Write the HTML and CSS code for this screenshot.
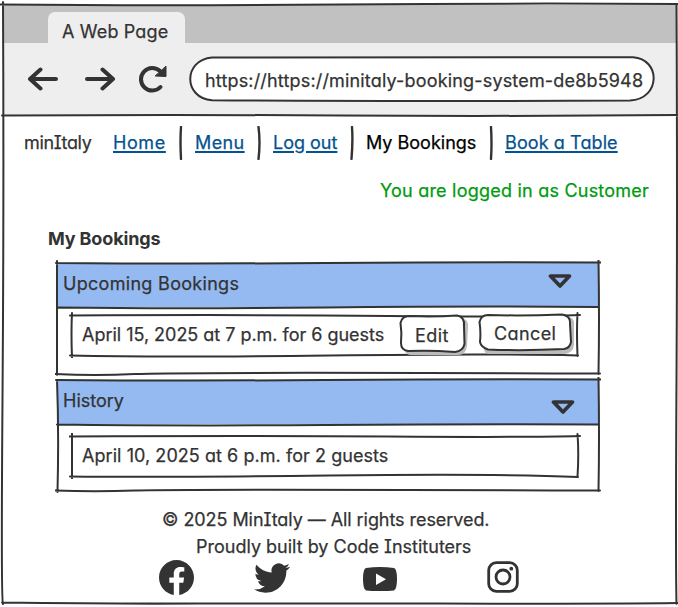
FILE: index.html
```html
<!DOCTYPE html>
<html lang="en">
<head>
<meta charset="utf-8">
<title>My Bookings</title>
<link rel="stylesheet" href="styles.css">
</head>
<body>
<div class="window">
  <svg class="frame" viewBox="0 0 678 607"><path d="M0 4.5Q160 6 340 4.500T678 4M3 2Q4 200 2.500 400T3 604M676.500 4Q677.500 200 676.500 380T676.500 604M2 115.500Q170 114.500 340 115.500T678 115M2 602.500Q110 604 200 603.500T440 603.500T678 603"/></svg>
  <header class="chrome">
    <div class="tabs"><div class="tab">A Web Page</div></div>
    <div class="toolbar">
      <svg class="arrow" viewBox="0 0 32 24"><path d="M29 12H3M13.500 2.500L3 12L13.500 21.500"/></svg>
      <svg class="arrow" viewBox="0 0 32 24"><path d="M3 12H29M18.500 2.500L29 12L18.500 21.500"/></svg>
      <svg class="reload" viewBox="0 0 30 28"><path d="M22.500 22A11.300 11.300 0 1 1 22 6"/><path class="solid" d="M28 1.500L28 11.500L17.500 11Z"/></svg>
      <div class="address">
        <svg class="outline" viewBox="0 0 466 46"><path class="paper" d="M23 1.500Q220 2 444 1.200C472 3 472 43 441 44.500Q220 45.500 23 44.300C-6 42 -6 4 23 1.500Z"/></svg>
        <span>https://https://minitaly-booking-system-de8b5948</span>
      </div>
    </div>
  </header>
  <nav class="nav">
    <span class="brand">minItaly</span>
    <a class="home">Home</a><svg class="sep" viewBox="0 0 4 34"><path d="M2 1Q1 15 2 33"/></svg>
    <a class="menu">Menu</a><svg class="sep" viewBox="0 0 4 34"><path d="M1.500 1Q3.500 16 1.500 33"/></svg>
    <a class="logout">Log out</a><svg class="sep" viewBox="0 0 4 34"><path d="M2 1Q3 15 1.500 33"/></svg>
    <span class="current">My Bookings</span><svg class="sep" viewBox="0 0 4 34"><path d="M2 1Q3 18 2 33"/></svg>
    <a class="book">Book a Table</a>
  </nav>
  <p class="status">You are logged in as Customer</p>
  <main>
    <h1>My Bookings</h1>
    <section class="panel upcoming">
      <div class="head"><span>Upcoming Bookings</span><svg class="caret" viewBox="0 0 24 16"><path d="M2.500 3H21.500L12 13Z"/></svg></div>
      <svg class="outline" viewBox="0 0 546 116"><path d="M1 3Q130 4 270 3T546 2.500M2 1V115M543.500 0Q544.500 60 543.500 114M3 47.500Q120 49 270 47.500T543 47M0 114Q40 116 80 114T545 113.500"/></svg>
      <div class="entry">
        <svg class="outline" viewBox="0 0 512 46"><path d="M1 3.500Q180 2.500 320 4T511 3M3 1Q2 20 3 46M508.500 1Q507.500 20 508.500 44M1 43.500Q90 45.500 260 43.500T509 43.500"/></svg>
        <span class="april15">April 15, 2025 at 7 p.m. for 6 guests</span>
        <button class="edit"><svg class="outline" viewBox="0 0 70 42"><path class="shadow" d="M10 4H61Q69 4 69 12L68 32Q67 41 59 41H12Q7 41 6 37Z"/><path class="paper" d="M10 2Q35 3 58 1.500Q66 3 65 12L65.500 30Q64 37 56 38Q32 36 9 37Q2 36 2 29Q3 19 1.500 9Q3 2 10 2Z"/></svg><span>Edit</span></button>
        <button class="cancel"><svg class="outline" viewBox="0 0 98 42"><path class="shadow" d="M10 4H89Q97 4 96 12L96 32Q95 40 87 41H12Q7 41 6 37Z"/><path class="paper" d="M10 2Q45 3 84 1.500Q93 3 92 11L93 29Q92 35 86 36Q45 38 10 36.500Q3 34 2 29Q3 19 1.500 9Q3 2 10 2Z"/></svg><span>Cancel</span></button>
      </div>
    </section>
    <section class="panel history">
      <div class="head"><span>History</span><svg class="caret" viewBox="0 0 24 16"><path d="M2.500 3H21.500L12 13Z"/></svg></div>
      <svg class="outline" viewBox="0 0 546 116"><path d="M1 3Q130 4 270 3T546 2.500M2 3Q4 55 2.500 115M543.500 0Q544.500 60 543.500 114M2 47.500Q120 49 270 48T543 47.500M0 113.500Q40 115 80 113.500T545 113.500"/></svg>
      <div class="entry">
        <svg class="outline" viewBox="0 0 512 46"><path d="M0 3.500Q180 2.500 320 3.500T511 3M3 0V46M508.500 1Q510 20 508.500 44M1 43.500Q90 44.500 260 42.500T509 44"/></svg>
        <span class="april10">April 10, 2025 at 6 p.m. for 2 guests</span>
      </div>
    </section>
  </main>
  <footer>
    <p class="rights">© 2025 MinItaly — All rights reserved.</p>
    <p class="built">Proudly built by Code Instituters</p>
    <div class="social">
      <svg class="facebook" viewBox="0 0 24 24"><path d="M24 12.073C24 5.446 18.627 0 12 0S0 5.446 0 12.073c0 6.026 4.388 11.020 10.125 11.927v-8.437H7.078v-3.490h3.047v-2.660c0-3.026 1.792-4.697 4.533-4.697 1.312 0 2.686.236 2.686.236v2.970h-1.513c-1.491 0-1.956.931-1.956 1.886v2.265h3.328l-.532 3.490h-2.796V24C19.612 23.093 24 18.099 24 12.073z"/></svg>
      <svg class="twitter" viewBox="0 0 24 24"><path d="M23.953 4.570a10 10 0 01-2.825.775 4.958 4.958 0 002.163-2.723c-.951.555-2.005.959-3.127 1.184a4.920 4.920 0 00-8.384 4.482C7.690 8.095 4.067 6.130 1.640 3.162a4.822 4.822 0 00-.666 2.475c0 1.710.870 3.213 2.188 4.096a4.904 4.904 0 01-2.228-.616v.060a4.923 4.923 0 003.946 4.827 4.996 4.996 0 01-2.212.085 4.936 4.936 0 004.604 3.417 9.867 9.867 0 01-6.102 2.105c-.390 0-.779-.023-1.170-.067a13.995 13.995 0 007.557 2.209c9.053 0 13.998-7.496 13.998-13.985 0-.210 0-.420-.015-.630A9.935 9.935 0 0024 4.590z"/></svg>
      <svg class="youtube" viewBox="0 0 34 24"><path fill-rule="evenodd" d="M3 1Q17-1 31 1Q34 2 34 12T31 23.500Q17 25 3 23.500Q0 22 0 12T3 1ZM13 6.500V18L23 12.200Z"/></svg>
      <svg class="instagram" viewBox="0 0 32 32"><rect x="1.700" y="1.700" width="28.600" height="28.600" rx="7.500"/><circle cx="16" cy="16" r="7"/><circle class="dot" cx="24.300" cy="7.700" r="1.900"/></svg>
    </div>
  </footer>
</div>
</body>
</html>
```
FILE: styles.css
```css
* { box-sizing: border-box; }
body { margin: 0; background: #fff; }
.window {
  position: relative;
  width: 678px;
  height: 607px;
  overflow: hidden;
  padding-top: 5px;
  color: #333;
  font: 18px/22px Inter, "Liberation Sans", sans-serif;
  font-feature-settings: "cv11" 1, "cv08" 1;
  -webkit-text-stroke: 0.25px currentColor;
  white-space: nowrap;
}
svg { display: block; flex: none; fill: none; stroke: #333; stroke-width: 2; stroke-linecap: round; stroke-linejoin: round; }
.frame { position: absolute; inset: 0; width: 678px; height: 607px; z-index: 2; }
.outline { position: absolute; inset: 0; width: 100%; height: 100%; }
.paper { fill: #fff; }
.shadow { fill: #bbb; stroke: none; }

.chrome { margin: 0 1px 0 3px; height: 110px; background: #eee; }
.tabs { height: 38px; padding: 7px 0 0 45px; background: #c1c1c1; }
.tab { width: 137px; height: 32px; padding: 9px 0 0 14px; border-radius: 7px 7px 0 0; background: #eee; letter-spacing: 0.15px; }
.toolbar { display: flex; align-items: center; height: 72px; padding: 0 20px 0 24px; }
.arrow { width: 32px; height: 24px; stroke-width: 4; margin-right: 25px; }
.reload { width: 30px; height: 28px; stroke-width: 4; margin: 0 21px 0 -3px; }
.solid { fill: #333; stroke-width: 1; }
.address { position: relative; width: 466px; height: 46px; padding: 13px 0 0 16px; letter-spacing: 0.17px; }
.address span { position: relative; top: 1px; }

.nav { display: flex; align-items: center; height: 56px; padding-left: 24px; }
.nav a { color: #045290; text-decoration: underline; text-decoration-thickness: 1.5px; text-underline-offset: 2px; }
.sep { width: 4px; height: 34px; stroke-width: 2.4; }
.brand { width: 89px; letter-spacing: -0.35px; }
.home { width: 66px; letter-spacing: 0.6px; }
.menu { width: 62px; margin-left: 12px; letter-spacing: 0.4px; }
.logout { width: 77px; margin-left: 12px; }
.current { width: 123px; margin-left: 12px; color: #000; }
.book { margin-left: 12px; letter-spacing: 0.1px; }
.status { margin: 9px 29px 0 0; text-align: right; color: #009b0f; letter-spacing: 0.22px; }

main { padding: 26px 0 0 55px; }
h1 { margin: 0 0 10px -7px; font-size: 18px; line-height: 22px; font-weight: 700; letter-spacing: -0.15px; -webkit-text-stroke: 0; }
.panel { position: relative; width: 546px; height: 116px; }
.upcoming { margin-bottom: 1px; }
.head { display: flex; justify-content: space-between; height: 47px; padding: 13px 28px 0 8px; background: linear-gradient(#94baf1, #94baf1) 2px 3px / 541px 44px no-repeat; }
.upcoming .head { letter-spacing: 0.3px; }
.caret { width: 24px; height: 16px; stroke-width: 3.7; margin-right: 1px; }
.history .caret { margin: 9px -2px 0 0; }
.entry { position: relative; display: flex; width: 512px; height: 46px; margin: 5px 0 0 14px; padding: 12px 0 0 13px; }
.history .entry { margin-top: 9px; }
.april15 { width: 317px; letter-spacing: -0.02px; }
.april10 { letter-spacing: 0.06px; }
button { position: relative; border: 0; padding: 0; background: none; color: inherit; font: inherit; font-feature-settings: inherit; text-align: left; }
button span { position: relative; }
.edit { width: 70px; height: 42px; margin: -10px 9px 0 0; padding-left: 16px; letter-spacing: 0.4px; }
.edit span { top: 1px; }
.cancel { width: 98px; height: 42px; margin-top: -11px; padding-left: 16px; letter-spacing: 0.4px; }

footer { position: relative; padding-top: 16px; }
footer p { margin: 0 0 5px; }
.rights { padding-left: 162px; letter-spacing: -0.06px; }
.built { padding-left: 196px; }
.social { display: flex; align-items: flex-start; margin-top: -3px; padding-left: 159px; }
.social svg { fill: #333; stroke: none; }
.facebook { width: 35px; height: 35px; }
.twitter { width: 36px; height: 36px; margin-left: 60px; }
.youtube { width: 34px; height: 24px; margin: 7px 0 0 73px; }
.social .instagram { width: 32px; height: 32px; margin: 1px 0 0 90px; fill: none; stroke: #333; stroke-width: 2.800; }
.social .dot { fill: #333; stroke: none; }
```
